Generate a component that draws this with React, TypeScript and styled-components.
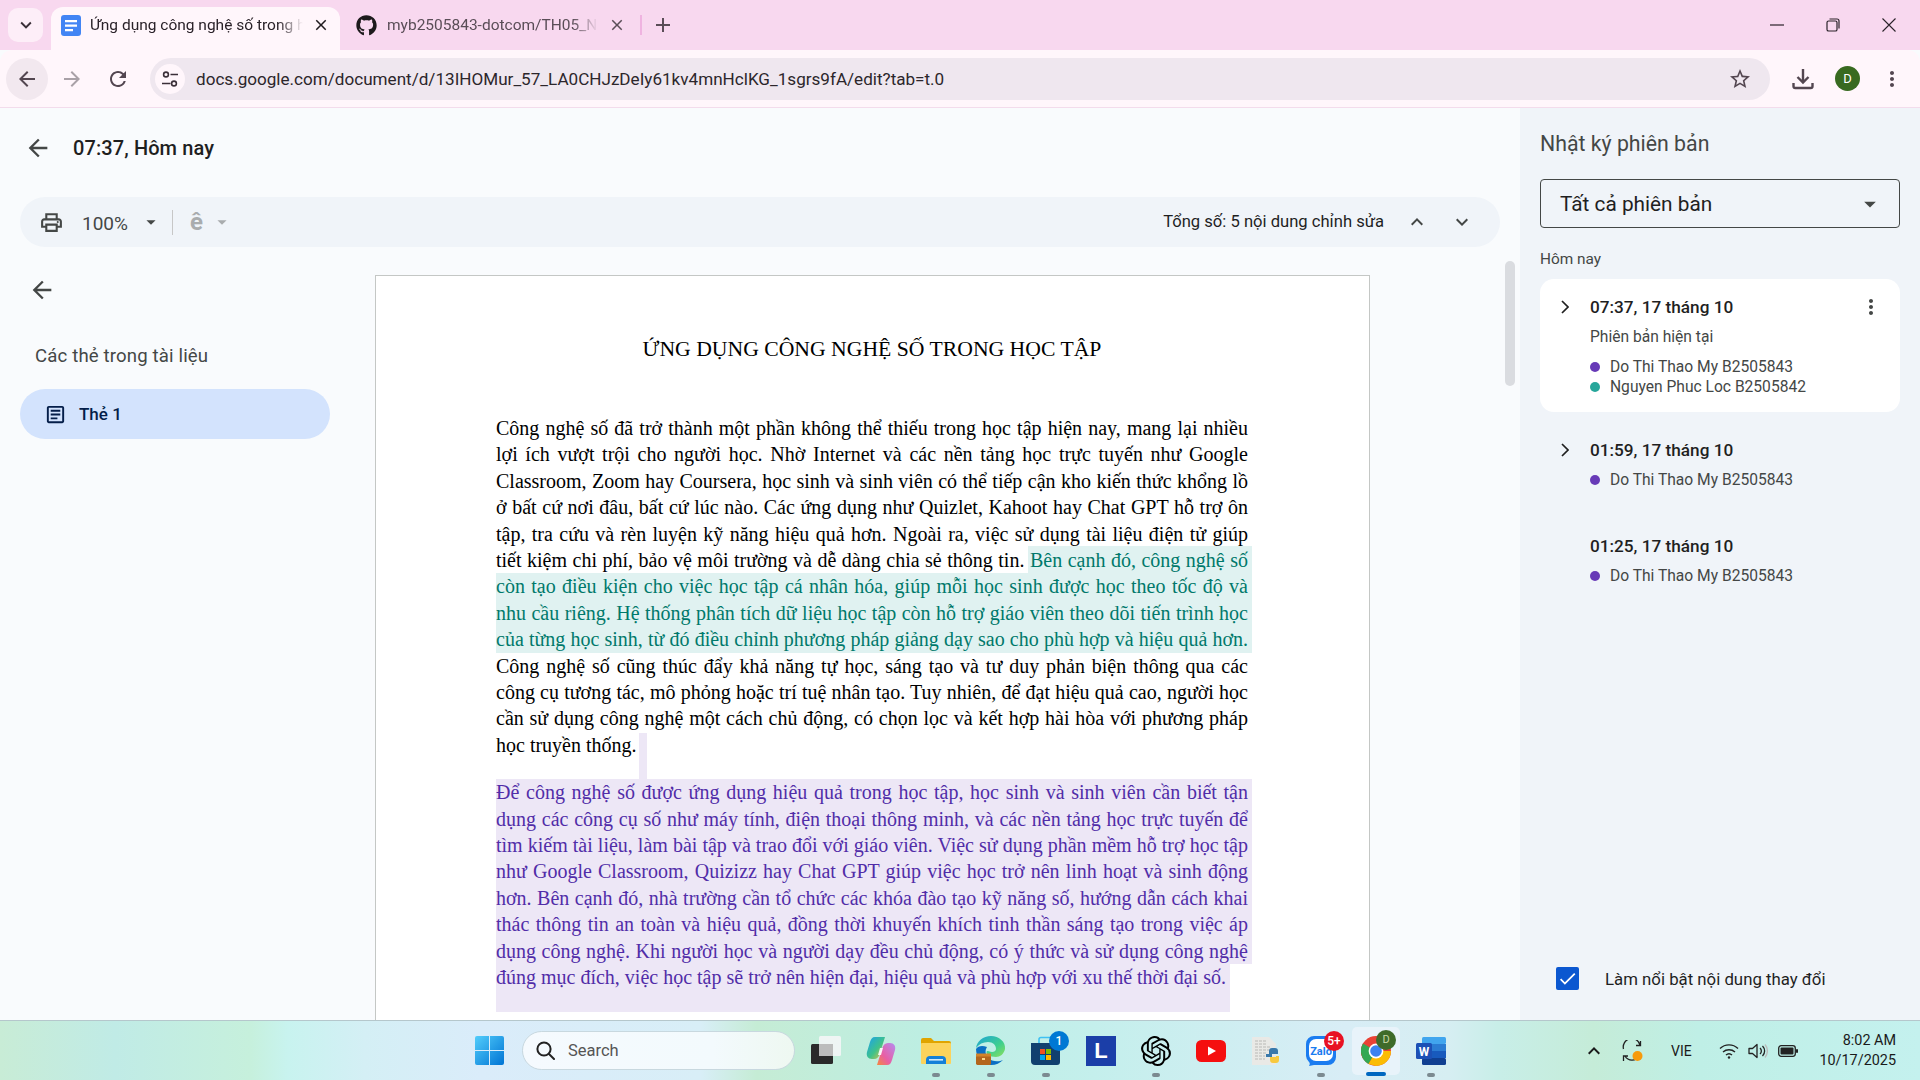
import React from "react";
import styled, { createGlobalStyle } from "styled-components";
import {
  MdArrowBack, MdArrowForward, MdRefresh, MdClose, MdAdd, MdKeyboardArrowDown, MdKeyboardArrowUp,
  MdStarBorder, MdMoreVert, MdOutlinePrint, MdArrowDropDown, MdOutlineArticle, MdCheck, MdExpandLess,
} from "react-icons/md";
import { FaGithub } from "react-icons/fa";
import { SiOpenai } from "react-icons/si";

const Global = createGlobalStyle`
  html, body { margin: 0; padding: 0; width: 1920px; height: 1080px; overflow: hidden; background: #f9fbfd; }
  * { box-sizing: border-box; }
  body { font-family: Roboto, "Noto Sans", sans-serif; }
`;

const Screen = styled.div`display: flex; flex-direction: column; width: 1920px; height: 1080px; overflow: hidden;`;

/* browser chrome */
const TabStrip = styled.div`display: flex; align-items: flex-start; height: 50px; background: #f8d8ef; flex: none; position: relative;`;
const TabListBtn = styled.div`width: 35px; height: 34px; margin: 8px 8px 0 8px; border-radius: 10px; background: #fdeef8; display: flex; align-items: center; justify-content: center; color: #3a2f38; font-size: 22px;`;
const ActiveTab = styled.div`width: 289px; height: 43px; margin-top: 7px; background: #fff6fb; border-radius: 12px 12px 0 0; display: flex; align-items: center; padding: 0 10px 7px; gap: 9px;`;
const InactiveTab = styled.div`width: 276px; height: 36px; margin: 7px 0 0 10px; display: flex; align-items: center; padding: 0 0 0 6px; gap: 10px;`;
const TabTitle = styled.div<{ $dim?: boolean }>`
  flex: 1; min-width: 0; font-size: 15.5px; line-height: 20px; white-space: nowrap; overflow: hidden; color: ${p => (p.$dim ? "#5a4d57" : "#2a2229")};
  -webkit-mask-image: linear-gradient(to right, #000 88%, transparent 100%);
  mask-image: linear-gradient(to right, #000 88%, transparent 100%);
`;
const TabClose = styled.span<{ $dim?: boolean }>`font-size: 18px; display: flex; color: ${p => (p.$dim ? "#5a4d57" : "#1f1a1e")};`;
const TabDivider = styled.div`width: 2px; height: 20px; background: #efb3e0; margin: 15px 0 0 14px;`;
const NewTab = styled.div`font-size: 24px; color: #5a4d57; display: flex; margin: 13px 0 0 9px;`;
const WindowControls = styled.div`margin-left: auto; display: flex; align-items: center; height: 50px; padding-right: 3px; color: #2a2229;`;
const WinBtn = styled.div`width: 56px; display: flex; align-items: center; justify-content: center;`;

const AddressBar = styled.div`display: flex; align-items: center; height: 58px; flex: none; background: #fff6fb; border-bottom: 1px solid #f3dcec; border-radius: 12px 12px 0 0; padding: 0 0 0 6px;`;
const RoundBtn = styled.div<{ $bg?: boolean; $dim?: boolean }>`
  width: 42px; height: 42px; border-radius: 50%; display: flex; align-items: center; justify-content: center; font-size: 24px; flex: none;
  background: ${p => (p.$bg ? "#f2e8ef" : "transparent")}; color: ${p => (p.$dim ? "#a9a1a7" : "#534650")};
`;
const NavSpacer = styled.div<{ $w: number }>`width: ${p => p.$w}px; flex: none;`;
const Omnibox = styled.div`width: 1620px; height: 42px; margin-left: 11px; border-radius: 21px; background: #efe7ef; display: flex; align-items: center; padding: 0 18px 0 5px; flex: none;`;
const TuneBtn = styled.div`width: 30px; height: 30px; border-radius: 50%; background: #fff6fb; display: flex; align-items: center; justify-content: center; flex: none;`;
const Url = styled.div`flex: 1; margin-left: 11px; padding-top: 1px; font-size: 17.1px; color: #2c262b; white-space: nowrap; overflow: hidden;`;
const StarIcon = styled.span`font-size: 24px; display: flex; color: #534650;`;
const BarActions = styled.div`display: flex; align-items: center; margin-left: 12px;`;
const Avatar = styled.div`width: 25px; height: 25px; border-radius: 50%; background: #386a20; color: #fff; font-size: 13px; display: flex; align-items: center; justify-content: center; margin: 0 11px;`;

/* page body */
const Body = styled.div`flex: 1; display: flex; min-height: 0; position: relative;`;
const Main = styled.div`flex: 1; min-width: 0; display: flex; flex-direction: column; background: #f9fbfd; position: relative; overflow: hidden;`;
const Header = styled.div`height: 80px; flex: none; display: flex; align-items: center; padding-left: 24px; gap: 21px;`;
const BackIcon = styled.span`font-size: 28px; display: flex; color: #444746;`;
const HeaderTitle = styled.div`font-size: 20px; font-weight: 500; color: #1f1f1f; letter-spacing: 0.1px;`;
const ToolPill = styled.div`height: 50px; flex: none; margin: 9px 20px 0; border-radius: 25px; background: #f0f4f9; display: flex; align-items: center; padding: 0 26px 0 19px;`;
const PrintIcon = styled.span`font-size: 25px; display: flex; color: #444746;`;
const Zoom = styled.div`font-size: 19px; color: #444746; margin: 2px 0 0 18px; width: 50px;`;
const Caret = styled.span<{ $dim?: boolean }>`font-size: 22px; display: flex; margin-left: ${p => (p.$dim ? "5px" : "8px")}; color: ${p => (p.$dim ? "#a9acae" : "#444746")};`;
const Rule = styled.div`width: 1px; height: 25px; background: #c7c7c7; margin: 0 17px 0 10px;`;
const SpellGlyph = styled.div`font-size: 24px; font-weight: 700; color: #a9acae; width: 16px; line-height: 1;`;
const Count = styled.div`margin-left: auto; padding-bottom: 2px; font-size: 16.6px; color: #1f1f1f;`;
const ArrowBtn = styled.span`font-size: 24px; color: #444746; display: flex; margin-left: 21px;`;

const Content = styled.div`flex: 1; display: flex; min-height: 0; margin-top: 28px;`;
const Sidebar = styled.div`width: 375px; flex: none; padding-left: 20px;`;
const SideBack = styled.span`font-size: 28px; display: flex; color: #444746; margin: 1px 0 0 8px;`;
const SideHeading = styled.div`font-size: 18.6px; letter-spacing: 0.15px; color: #444746; margin: 40px 0 0 15px; line-height: 24px;`;
const TabPill = styled.div`width: 310px; height: 50px; margin-top: 21px; background: #d3e3fd; border-radius: 25px; display: flex; align-items: center; padding-left: 24px; gap: 12px; color: #041e49;`;
const PillIcon = styled.span`font-size: 23px; display: flex;`;
const PillLabel = styled.span`font-size: 17px; font-weight: 500;`;

const Page = styled.div`width: 995px; flex: none; background: #fff; border: 1px solid #c4c7c5; padding: 60px 121px 0 120px; height: 1000px; font-family: "Liberation Serif", "Times New Roman", serif; color: #000;`;
const DocTitle = styled.div`font-size: 21.7px; text-align: center; line-height: 26px; white-space: nowrap;`;
const Para = styled.div`margin-top: 53px; font-size: 20px; line-height: 26.4px;`;
const Para2 = styled.div`margin-top: 21px; font-size: 20px; line-height: 26.4px;`;
const Line = styled.div<{ $tint?: "teal" | "purple" }>`
  text-align: justify; text-align-last: justify; position: relative;
  ${p => p.$tint === "teal" && "color:#00796b;background:#e0f2f1;margin-right:-4px;padding-right:4px;"}
  ${p => p.$tint === "purple" && "color:#512da8;background:#ede7f6;margin-right:-4px;padding-right:4px;"}
`;
const TealRun = styled.span`color: #00796b; background: #e0f2f1; padding: 3px 4px 4px 2px; margin-right: -4px; margin-left: -2px;`;
const PlainLine = styled.div`position: relative; height: 26.4px;`;
const Marker = styled.span`position: absolute; top: 1px; height: 47px; width: 8px; background: #ede7f6; margin-left: 2px;`;
const EndLine = styled.div`width: 734px; height: 47.4px; background: #ede7f6; color: #512da8; white-space: nowrap;`;

const ScrollThumb = styled.div`position: absolute; left: 1505px; top: 153px; width: 10px; height: 125px; border-radius: 5px; background: #dadce0;`;

/* version panel */
const Panel = styled.div`width: 400px; flex: none; background: #f0f4f9; padding: 0 20px; position: relative; display: flex; flex-direction: column;`;
const PanelTitle = styled.div`font-size: 21.3px; color: #444746; margin-top: 22px; line-height: 28px;`;
const Select = styled.div`height: 49px; margin-top: 21px; border: 1px solid #444746; border-radius: 4px; display: flex; align-items: center; justify-content: space-between; padding: 0 15px 0 19px; font-size: 20.8px; color: #1f1f1f;`;
const SelectCaret = styled.span`font-size: 28px; display: flex; color: #444746;`;
const DayLabel = styled.div`font-size: 15.4px; color: #444746; margin-top: 21px; line-height: 20px;`;
const Card = styled.div<{ $active?: boolean }>`
  margin-top: ${p => (p.$active ? "10px" : "0")}; padding: ${p => (p.$active ? "16px" : "26px")} 16px 0 14px;
  height: ${p => (p.$active ? "133px" : "96px")};
  border-radius: 14px; background: ${p => (p.$active ? "#fff" : "transparent")};
`;
const CardTop = styled.div`display: flex; align-items: center; height: 24px;`;
const ChevSlot = styled.span`display: flex; align-items: center; width: 36px; padding-left: 7px; color: #1f1f1f;`;
const When = styled.div`font-size: 17.2px; font-weight: 500; color: #1f1f1f;`;
const Kebab = styled.span`font-size: 24px; display: flex; margin: 0 1px 0 auto; color: #444746;`;
const Sub = styled.div`margin: 8px 0 0 36px; font-size: 15.6px; color: #444746; line-height: 20px;`;
const People = styled.div<{ $tight?: boolean }>`margin: ${p => (p.$tight ? "8px" : "10px")} 0 0 36px;`;
const Person = styled.div`display: flex; align-items: center; gap: 10px; font-size: 15.6px; color: #444746; line-height: 20px; white-space: nowrap;`;
const Dot = styled.span<{ $c: string }>`width: 10px; height: 10px; border-radius: 50%; background: ${p => p.$c}; flex: none;`;
const HighlightRow = styled.div`position: absolute; left: 36px; bottom: 30px; display: flex; align-items: center; gap: 26px; font-size: 16.8px; color: #1f1f1f;`;
const CheckBox = styled.span`width: 23px; height: 23px; border-radius: 2px; background: #0b57d0; color: #fff; display: flex; align-items: center; justify-content: center; font-size: 21px;`;

/* taskbar */
const Taskbar = styled.div`
  height: 60px; flex: none; border-top: 1px solid #b5c7cc; position: relative; display: flex; align-items: center;
  background: linear-gradient(90deg, #c8ecd6 0%, #c0ebe6 6%, #c6f0dc 13%, #c8f3ef 15%, #d4eff5 19%, #daecfa 25%, #d8eef7 36.5%, #c5ecd5 39.4%, #bdeee2 48%, #c4efec 57%, #d8edf6 70%, #d6eef2 75.5%, #c8eee8 78%, #c5ecd8 83%, #bfefe6 88.5%, #c4f1ee 100%);
`;
const Centre = styled.div`display: flex; align-items: center; margin-left: 475px; height: 100%;`;
const SearchBox = styled.div`width: 273px; height: 39px; margin: 0 7px 0 18px; border-radius: 20px; border: 1px solid #c8d8df; background: linear-gradient(90deg, #f5fafe, #f3fafd 70%, #eef8f1); display: flex; align-items: center; padding-left: 13px; gap: 13px; font-size: 16.5px; color: #555; flex: none;`;
const TaskIcon = styled.div<{ $on?: boolean; $open?: boolean }>`
  width: 48px; height: 48px; margin-right: 7px; flex: none; border-radius: 5px; position: relative; display: flex; align-items: center; justify-content: center;
  background: ${p => (p.$on ? "#e8f3fa" : "transparent")};
  &::after {
    content: ""; position: absolute; bottom: ${p => (p.$on ? "1px" : "0")}; left: 50%; transform: translateX(-50%) translateY(2px);
    width: ${p => (p.$on ? "20px" : "8px")}; height: 4px; border-radius: 2px; background: ${p => (p.$on ? "#0067c0" : "#7b8a90")};
    display: ${p => (p.$open ? "block" : "none")};
  }
`;
const Badge = styled.span<{ $c: string }>`position: absolute; top: 4px; right: 1px; min-width: 20px; height: 20px; border-radius: 10px; background: ${p => p.$c}; color: #fff; font-size: 12px; font-weight: 500; display: flex; align-items: center; justify-content: center; z-index: 1;`;
const AvatarBadge = styled.span`position: absolute; top: 3px; right: 4px; width: 20px; height: 20px; border-radius: 50%; background: #3f6b2a; color: #c8d8a8; font-size: 11px; display: flex; align-items: center; justify-content: center;`;
const Tray = styled.div`margin-left: auto; display: flex; align-items: center; padding-right: 24px; color: #1a1a1a;`;
const TrayItem = styled.div<{ $w: number }>`width: ${p => p.$w}px; display: flex; justify-content: center; align-items: center; font-size: 14px; flex: none;`;
const Clock = styled.div`text-align: right; font-size: 14.4px; line-height: 20px; margin-left: 15px; color: #1a1a1a;`;

const DocsIcon = () => (
  <svg width="20" height="21" viewBox="0 0 20 21"><rect width="20" height="21" rx="3" fill="#4285f4" /><path d="M4 5h12v2.2H4zM4 9.5h12v2.2H4zM4 14h8v2.2H4z" fill="#fff" /></svg>
);
const TuneIcon = () => (
  <svg width="18" height="18" viewBox="0 0 18 18" fill="none" stroke="#3a2f38" strokeWidth="1.6"><circle cx="5" cy="4.5" r="2.4" /><path d="M9.5 4.5H17M1 13.5h8.5" /><circle cx="13" cy="13.5" r="2.4" /></svg>
);
const DownloadIcon = () => (
  <svg width="22" height="22" viewBox="0 0 22 22" fill="none" stroke="#534650" strokeWidth="2.4"><path d="M11 1v13M5.5 9l5.5 5.5L16.5 9" /><path d="M1.5 15v3.2a1.8 1.8 0 0 0 1.8 1.8h15.4a1.8 1.8 0 0 0 1.8-1.8V15" /></svg>
);
const RestoreIcon = () => (
  <svg width="14" height="14" viewBox="0 0 14 14" fill="none" stroke="#2a2229" strokeWidth="1.2"><rect x="1" y="3" width="10" height="10" rx="1.6" /><path d="M3.5 1h7.5A2 2 0 0 1 13 3v7.5" /></svg>
);
const MinIcon = () => (<svg width="14" height="14" viewBox="0 0 14 14"><path d="M0 7h14" stroke="#2a2229" strokeWidth="1.2" /></svg>);
const CloseIcon = () => (<svg width="14" height="14" viewBox="0 0 14 14"><path d="M0.5 0.5l13 13M13.5 0.5l-13 13" stroke="#2a2229" strokeWidth="1.1" /></svg>);
const ChevRight = () => (<svg width="8" height="14" viewBox="0 0 8 14" fill="none" stroke="#1f1f1f" strokeWidth="1.7"><path d="M1 1l6 6-6 6" /></svg>);

const WinLogo = () => (
  <svg width="29" height="29" viewBox="0 0 29 29"><defs><linearGradient id="wl" x1="0" y1="0" x2="1" y2="1"><stop offset="0" stopColor="#52cdfb" /><stop offset="1" stopColor="#0074d4" /></linearGradient></defs><path d="M0 2a2 2 0 0 1 2-2h12v14H0zM15 0h12a2 2 0 0 1 2 2v12H15zM0 15h14v14H2a2 2 0 0 1-2-2zM15 15h14v12a2 2 0 0 1-2 2H15z" fill="url(#wl)" /></svg>
);
const SearchGlyph = () => (
  <svg width="19" height="19" viewBox="0 0 19 19" fill="none" stroke="#222" strokeWidth="2"><circle cx="8" cy="8" r="6.6" /><path d="M13 13l5 5" strokeLinecap="round" /></svg>
);
const TaskView = () => (
  <svg width="30" height="30" viewBox="0 0 30 30"><rect x="0" y="8" width="22" height="20" rx="1.5" fill="#2a2a2a" /><rect x="8" y="0" width="22" height="20" rx="1.5" fill="#f3f5f6" fillOpacity="0.92" /><rect x="8" y="8" width="14" height="12" fill="#bcbcbc" /></svg>
);
const Copilot = () => (
  <svg width="30" height="30" viewBox="0 0 30 30"><defs><linearGradient id="cpa" x1="0" y1="0" x2="1" y2="1"><stop offset="0" stopColor="#1aa0f0" /><stop offset="0.55" stopColor="#3fc28a" /><stop offset="1" stopColor="#f6c23c" /></linearGradient><linearGradient id="cpb" x1="1" y1="0" x2="0" y2="1"><stop offset="0" stopColor="#b58cf0" /><stop offset="0.6" stopColor="#e85fa5" /><stop offset="1" stopColor="#f5893c" /></linearGradient></defs><path d="M9 1h10l-5 16c-1 4-3 6-6 6H6C2 23 0 20 1 16L4 6c1-3 2-5 5-5z" fill="url(#cpa)" /><path d="M21 29H11l5-16c1-4 3-6 6-6h2c4 0 6 3 5 7l-3 10c-1 3-2 5-5 5z" fill="url(#cpb)" /><path d="M14 12h3l-2 7h-3z" fill="#fff" fillOpacity="0.9" /></svg>
);
const Folder = () => (
  <svg width="30" height="27" viewBox="0 0 30 27"><path d="M0 3a2 2 0 0 1 2-2h8l3 3h15a2 2 0 0 1 2 2v3H0z" fill="#e0a400" /><rect y="6" width="30" height="21" rx="1" fill="#fcd35b" /><path d="M5 27v-4a4 4 0 0 1 4-4h12a4 4 0 0 1 4 4v4z" fill="#1480d8" /><rect x="8" y="22" width="14" height="1.6" fill="#cfe8fb" /></svg>
);
const Edge = () => (
  <svg width="30" height="30" viewBox="0 0 30 30"><defs><linearGradient id="ed" x1="0" y1="0" x2="1" y2="1"><stop offset="0" stopColor="#1ea4d8" /><stop offset="0.6" stopColor="#3ecf8e" /><stop offset="1" stopColor="#8ee05c" /></linearGradient></defs><path d="M15 0C7 0 1 5 0 12c3-4 7-6 12-6 5 0 8 3 8 7 0 2-2 3-4 3s-3-1-4-1c-2 0-2 2 0 4 2 1 5 2 8 2 4 0 8-3 9-8C30 6 23 0 15 0z" fill="url(#ed)" /><path d="M0 13c0 9 7 16 15 16 5 0 9-2 12-5-4 2-11 2-15-2-3-4-3-8-1-11C6 9 2 10 0 13z" fill="#0b6fc4" /><rect y="19" width="15" height="10" rx="1.4" fill="#b3661c" /><rect y="17.5" width="15" height="3" fill="#d1842a" /><rect x="6" y="22" width="3" height="2" fill="#ffd88a" /></svg>
);
const Store = () => (
  <svg width="30" height="30" viewBox="0 0 30 30"><path d="M8 7V3.5A2 2 0 0 1 10 1.5h10" fill="none" stroke="#3fc1f3" strokeWidth="1.6" /><path d="M0 7h29v19a3 3 0 0 1-3 3H4a4 4 0 0 1-4-4z" fill="#11406f" /><rect x="9" y="13" width="5" height="5" fill="#f25022" /><rect x="15" y="13" width="5" height="5" fill="#7fba00" /><rect x="9" y="19" width="5" height="5" fill="#00a4ef" /><rect x="15" y="19" width="5" height="5" fill="#ffb900" /></svg>
);
const LApp = styled.div`width: 30px; height: 30px; background: #1b3ea8; color: #fff; font: 700 22px "Liberation Sans", sans-serif; display: flex; align-items: center; justify-content: center;`;
const Youtube = () => (
  <svg width="30" height="22" viewBox="0 0 30 22"><rect width="30" height="22" rx="5.5" fill="#f50f0f" /><path d="M12 6.5l8 4.5-8 4.5z" fill="#fff" /></svg>
);
const PyFile = () => (
  <svg width="28" height="30" viewBox="0 0 28 30"><path d="M0 1h17l7 7v21H0z" fill="#e9e9e6" /><path d="M3 5h11M3 8h11M3 11h16M3 14h14M3 17h12M3 20h10M3 23h10" stroke="#b9b9b6" strokeWidth="1.2" strokeDasharray="3 1" /><path d="M17 15a3 3 0 0 1 3-3h3a3 3 0 0 1 3 3v3h-6v1h-3z" fill="#3a78aa" /><path d="M27 24a3 3 0 0 1-3 3h-3a3 3 0 0 1-3-3v-3h6v-1h3z" fill="#f7c93e" /><rect x="14" y="18" width="6" height="3" fill="#3a78aa" /></svg>
);
const Zalo = () => (
  <svg width="30" height="30" viewBox="0 0 30 30"><path d="M8 0h14a8 8 0 0 1 8 8v13a8 8 0 0 1-8 8H8l-5 1c1-2 1-3 0-4a9 9 0 0 1-3-6V8a8 8 0 0 1 8-8z" fill="#1a7cf0" /><rect x="3" y="3" width="24" height="22" rx="7" fill="#fff" /><text x="15" y="19" textAnchor="middle" fontSize="11" fontWeight="700" fontFamily="Roboto, sans-serif" fill="#1a7cf0">Zalo</text></svg>
);
const Chrome = () => (
  <svg width="30" height="30" viewBox="-15 -15 30 30"><circle r="15" fill="#e94235" /><path d="M0 0L-13 7.5A15 15 0 0 1-13-7.5L-7.5 -13z" fill="#e94235" /><path d="M-13-7.5L0 0-7.5 13A15 15 0 0 1-13-7.5z" fill="#34a853" /><path d="M-7.5 13L0 0 15 0A15 15 0 0 1 0 15z" fill="#fbbc04" /><circle r="7.4" fill="#fff" /><circle r="5.8" fill="#3b82f0" /></svg>
);
const Word = () => (
  <svg width="30" height="28" viewBox="0 0 30 28"><rect x="6" y="0" width="24" height="7" rx="1.5" fill="#41a5ee" /><rect x="6" y="7" width="24" height="7" fill="#2b7cd3" /><rect x="6" y="14" width="24" height="7" fill="#185abd" /><rect x="6" y="21" width="24" height="7" rx="1.5" fill="#103f91" /><rect x="0" y="6" width="16" height="16" rx="1.5" fill="#1c50b5" /><text x="8" y="18.5" textAnchor="middle" fontSize="12" fontWeight="700" fontFamily="Roboto, sans-serif" fill="#fff">W</text></svg>
);
const SyncIcon = () => (
  <svg width="22" height="22" viewBox="0 0 22 22" fill="none" stroke="#222" strokeWidth="1.3"><path d="M1.5 9A8 8 0 0 1 18 5M18.5 1v4.5H14" /><path d="M17 16a8 8 0 0 1-14 0M1.5 21v-5H6" /><circle cx="15.5" cy="16" r="5" fill="#f79a0c" stroke="none" /></svg>
);
const WifiIcon = () => (
  <svg width="20" height="16" viewBox="0 0 20 16" fill="none" stroke="#222" strokeWidth="1.4"><path d="M1 5.5a13 13 0 0 1 18 0M4 9a9 9 0 0 1 12 0M7 12a4.5 4.5 0 0 1 6 0" /><circle cx="10" cy="14.5" r="1.2" fill="#222" stroke="none" /></svg>
);
const SpeakerIcon = () => (
  <svg width="20" height="16" viewBox="0 0 20 16" fill="none" stroke="#222" strokeWidth="1.3"><path d="M1 5.5h3.5L9 1.5v13l-4.5-4H1z" strokeLinejoin="round" /><path d="M12 5a4 4 0 0 1 0 6M14.5 3a7 7 0 0 1 0 10" /><path d="M17 1.5a10 10 0 0 1 0 13" stroke="#bbb" /></svg>
);
const BatteryIcon = () => (
  <svg width="20" height="12" viewBox="0 0 20 12"><rect x="0.7" y="0.7" width="16.6" height="10.6" rx="2.5" fill="none" stroke="#222" strokeWidth="1.3" /><rect x="2.5" y="2.5" width="13" height="7" rx="1" fill="#222" /><rect x="18" y="4" width="2" height="4" rx="1" fill="#222" /></svg>
);

const para1 = [
  "Công nghệ số đã trở thành một phần không thể thiếu trong học tập hiện nay, mang lại nhiều",
  "lợi ích vượt trội cho người học. Nhờ Internet và các nền tảng học trực tuyến như Google",
  "Classroom, Zoom hay Coursera, học sinh và sinh viên có thể tiếp cận kho kiến thức khổng lồ",
  "ở bất cứ nơi đâu, bất cứ lúc nào. Các ứng dụng như Quizlet, Kahoot hay Chat GPT hỗ trợ ôn",
  "tập, tra cứu và rèn luyện kỹ năng hiệu quả hơn. Ngoài ra, việc sử dụng tài liệu điện tử giúp",
];
const tealLines = [
  "còn tạo điều kiện cho việc học tập cá nhân hóa, giúp mỗi học sinh được học theo tốc độ và",
  "nhu cầu riêng. Hệ thống phân tích dữ liệu học tập còn hỗ trợ giáo viên theo dõi tiến trình học",
  "của từng học sinh, từ đó điều chỉnh phương pháp giảng dạy sao cho phù hợp và hiệu quả hơn.",
];
const para1End = [
  "Công nghệ số cũng thúc đẩy khả năng tự học, sáng tạo và tư duy phản biện thông qua các",
  "công cụ tương tác, mô phỏng hoặc trí tuệ nhân tạo. Tuy nhiên, để đạt hiệu quả cao, người học",
  "cần sử dụng công nghệ một cách chủ động, có chọn lọc và kết hợp hài hòa với phương pháp",
];
const para2 = [
  "Để công nghệ số được ứng dụng hiệu quả trong học tập, học sinh và sinh viên cần biết tận",
  "dụng các công cụ số như máy tính, điện thoại thông minh, và các nền tảng học trực tuyến để",
  "tìm kiếm tài liệu, làm bài tập và trao đổi với giáo viên. Việc sử dụng phần mềm hỗ trợ học tập",
  "như Google Classroom, Quizizz hay Chat GPT giúp việc học trở nên linh hoạt và sinh động",
  "hơn. Bên cạnh đó, nhà trường cần tổ chức các khóa đào tạo kỹ năng số, hướng dẫn cách khai",
  "thác thông tin an toàn và hiệu quả, đồng thời khuyến khích tinh thần sáng tạo trong việc áp",
  "dụng công nghệ. Khi người học và người dạy đều chủ động, có ý thức và sử dụng công nghệ",
];

const versions = [
  { when: "01:59, 17 tháng 10", chev: true },
  { when: "01:25, 17 tháng 10", chev: false },
];

export default function App() {
  return (
    <Screen>
      <Global />
      <TabStrip>
        <TabListBtn><MdKeyboardArrowDown /></TabListBtn>
        <ActiveTab>
          <DocsIcon />
          <TabTitle>Ứng dụng công nghệ số trong học tập</TabTitle>
          <TabClose><MdClose /></TabClose>
        </ActiveTab>
        <InactiveTab>
          <FaGithub size={21} color="#1d1a1c" />
          <TabTitle $dim>myb2505843-dotcom/TH05_NhomBaiTap</TabTitle>
          <TabClose $dim><MdClose /></TabClose>
        </InactiveTab>
        <TabDivider />
        <NewTab><MdAdd /></NewTab>
        <WindowControls>
          <WinBtn><MinIcon /></WinBtn>
          <WinBtn><RestoreIcon /></WinBtn>
          <WinBtn><CloseIcon /></WinBtn>
        </WindowControls>
      </TabStrip>
      <AddressBar>
        <RoundBtn $bg><MdArrowBack /></RoundBtn>
        <NavSpacer $w={3} />
        <RoundBtn $dim><MdArrowForward /></RoundBtn>
        <NavSpacer $w={4} />
        <RoundBtn><MdRefresh /></RoundBtn>
        <Omnibox>
          <TuneBtn><TuneIcon /></TuneBtn>
          <Url>docs.google.com/document/d/13IHOMur_57_LA0CHJzDeIy61kv4mnHclKG_1sgrs9fA/edit?tab=t.0</Url>
          <StarIcon><MdStarBorder /></StarIcon>
        </Omnibox>
        <BarActions>
          <RoundBtn><DownloadIcon /></RoundBtn>
          <Avatar>D</Avatar>
          <RoundBtn><MdMoreVert /></RoundBtn>
        </BarActions>
      </AddressBar>
      <Body>
        <Main>
          <Header>
            <BackIcon><MdArrowBack /></BackIcon>
            <HeaderTitle>07:37, Hôm nay</HeaderTitle>
          </Header>
          <ToolPill>
            <PrintIcon><MdOutlinePrint /></PrintIcon>
            <Zoom>100%</Zoom>
            <Caret><MdArrowDropDown /></Caret>
            <Rule />
            <SpellGlyph>ê</SpellGlyph>
            <Caret $dim><MdArrowDropDown /></Caret>
            <Count>Tổng số: 5 nội dung chỉnh sửa</Count>
            <ArrowBtn><MdKeyboardArrowUp /></ArrowBtn>
            <ArrowBtn><MdKeyboardArrowDown /></ArrowBtn>
          </ToolPill>
          <Content>
            <Sidebar>
              <SideBack><MdArrowBack /></SideBack>
              <SideHeading>Các thẻ trong tài liệu</SideHeading>
              <TabPill>
                <PillIcon><MdOutlineArticle /></PillIcon>
                <PillLabel>Thẻ 1</PillLabel>
              </TabPill>
            </Sidebar>
            <Page>
              <DocTitle>ỨNG DỤNG CÔNG NGHỆ SỐ TRONG HỌC TẬP</DocTitle>
              <Para>
                {para1.map(t => <Line key={t}>{t}</Line>)}
                <Line>tiết kiệm chi phí, bảo vệ môi trường và dễ dàng chia sẻ thông tin. <TealRun>Bên cạnh đó, công nghệ số</TealRun></Line>
                {tealLines.map(t => <Line key={t} $tint="teal">{t}</Line>)}
                {para1End.map(t => <Line key={t}>{t}</Line>)}
                <PlainLine>học truyền thống.<Marker /></PlainLine>
              </Para>
              <Para2>
                {para2.map(t => <Line key={t} $tint="purple">{t}</Line>)}
                <EndLine>đúng mục đích, việc học tập sẽ trở nên hiện đại, hiệu quả và phù hợp với xu thế thời đại số.</EndLine>
              </Para2>
            </Page>
          </Content>
          <ScrollThumb />
        </Main>
        <Panel>
          <PanelTitle>Nhật ký phiên bản</PanelTitle>
          <Select>Tất cả phiên bản<SelectCaret><MdArrowDropDown /></SelectCaret></Select>
          <DayLabel>Hôm nay</DayLabel>
          <Card $active>
            <CardTop>
              <ChevSlot><ChevRight /></ChevSlot>
              <When>07:37, 17 tháng 10</When>
              <Kebab><MdMoreVert /></Kebab>
            </CardTop>
            <Sub>Phiên bản hiện tại</Sub>
            <People>
              <Person><Dot $c="#673ab7" />Do Thi Thao My B2505843</Person>
              <Person><Dot $c="#26a69a" />Nguyen Phuc Loc B2505842</Person>
            </People>
          </Card>
          {versions.map(v => (
            <Card key={v.when}>
              <CardTop>
                <ChevSlot>{v.chev && <ChevRight />}</ChevSlot>
                <When>{v.when}</When>
              </CardTop>
              <People $tight>
                <Person><Dot $c="#673ab7" />Do Thi Thao My B2505843</Person>
              </People>
            </Card>
          ))}
          <HighlightRow>
            <CheckBox><MdCheck /></CheckBox>
            Làm nổi bật nội dung thay đổi
          </HighlightRow>
        </Panel>
      </Body>
      <Taskbar>
        <Centre>
          <WinLogo />
          <SearchBox><SearchGlyph />Search</SearchBox>
          <TaskIcon><TaskView /></TaskIcon>
          <TaskIcon><Copilot /></TaskIcon>
          <TaskIcon $open><Folder /></TaskIcon>
          <TaskIcon $open><Edge /></TaskIcon>
          <TaskIcon $open><Store /><Badge $c="#0078d4">1</Badge></TaskIcon>
          <TaskIcon><LApp>L</LApp></TaskIcon>
          <TaskIcon $open><SiOpenai size={30} color="#000" /></TaskIcon>
          <TaskIcon><Youtube /></TaskIcon>
          <TaskIcon><PyFile /></TaskIcon>
          <TaskIcon $open><Zalo /><Badge $c="#e81123">5+</Badge></TaskIcon>
          <TaskIcon $on $open><Chrome /><AvatarBadge>D</AvatarBadge></TaskIcon>
          <TaskIcon $open><Word /></TaskIcon>
        </Centre>
        <Tray>
          <TrayItem $w={48}><MdExpandLess size={24} /></TrayItem>
          <TrayItem $w={30}><SyncIcon /></TrayItem>
          <TrayItem $w={66}>VIE</TrayItem>
          <TrayItem $w={30}><WifiIcon /></TrayItem>
          <TrayItem $w={28}><SpeakerIcon /></TrayItem>
          <TrayItem $w={32}><BatteryIcon /></TrayItem>
          <Clock>8:02 AM<br />10/17/2025</Clock>
        </Tray>
      </Taskbar>
    </Screen>
  );
}
